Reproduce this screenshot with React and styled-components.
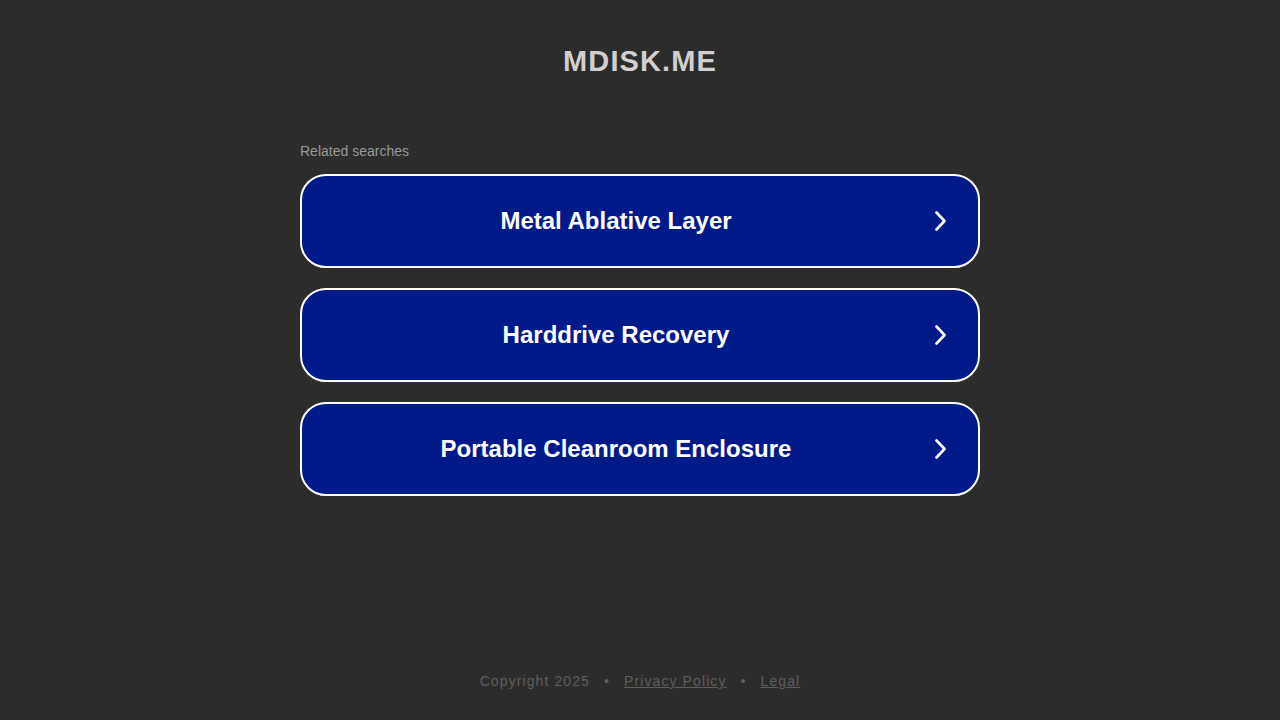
import React from "react";
import styled, { createGlobalStyle } from "styled-components";

const GlobalStyle = createGlobalStyle`
  html, body {
    margin: 0;
    padding: 0;
    background: #2c2c2c;
    font-family: "Liberation Sans", Arial, sans-serif;
  }
`;

const Page = styled.div`
  display: flex;
  flex-direction: column;
  align-items: center;
  height: 720px;
`;

const Header = styled.header`
  padding-top: 43px;
  height: 100px;
  box-sizing: border-box;

  h1 {
    margin: 0;
    font-size: 29px;
    line-height: 36px;
    font-weight: 700;
    letter-spacing: 1.1px;
    color: #d0d0d0;
    text-align: center;
  }
`;

const Related = styled.section`
  width: 680px;
  margin-top: 43px;
  display: flex;
  flex-direction: column;
  gap: 20px;
`;

const Label = styled.div`
  font-size: 14px;
  line-height: 16px;
  color: #999;
  margin-bottom: -5px;
`;

const SearchLink = styled.a`
  display: flex;
  align-items: center;
  height: 94px;
  box-sizing: border-box;
  border: 2px solid #fff;
  border-radius: 26px;
  background: #011a8a;
  color: #fff;
  text-decoration: none;
  padding-right: 28px;

  span {
    flex: 1;
    text-align: center;
    font-size: 24px;
    font-weight: 700;
  }

  svg {
    width: 20px;
    height: 20px;
  }
`;

const Footer = styled.footer`
  margin-top: auto;
  padding-bottom: 31px;
  font-size: 14px;
  letter-spacing: 1.1px;
  color: #5e5e5e;
  display: flex;
  gap: 14px;

  a {
    color: #5e5e5e;
    text-decoration: underline;
  }
`;

const Chevron = () => (
  <svg viewBox="0 0 20 20" fill="none" stroke="#fff" strokeWidth="2.6" strokeLinecap="round" strokeLinejoin="round">
    <path d="M6.5 1.5 L14.5 10 L6.5 18.5" />
  </svg>
);

const searches = [
  "Metal Ablative Layer",
  "Harddrive Recovery",
  "Portable Cleanroom Enclosure",
];

export default function App() {
  return (
    <Page>
      <GlobalStyle />
      <Header>
        <h1>MDISK.ME</h1>
      </Header>
      <Related>
        <Label>Related searches</Label>
        {searches.map((s) => (
          <SearchLink href="#" key={s}>
            <span>{s}</span>
            <Chevron />
          </SearchLink>
        ))}
      </Related>
      <Footer>
        <span>Copyright 2025</span>
        <span>•</span>
        <a href="#">Privacy Policy</a>
        <span>•</span>
        <a href="#">Legal</a>
      </Footer>
    </Page>
  );
}
